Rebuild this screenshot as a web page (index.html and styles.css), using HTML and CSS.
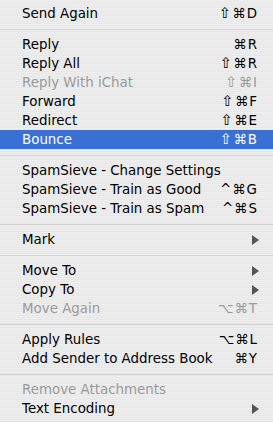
FILE: index.html
```html
<!DOCTYPE html>
<html lang="en">
<head>
    <meta charset="UTF-8">
    <meta name="viewport" content="width=device-width, initial-scale=1.0">
    <title>Message Menu</title>
    <link rel="stylesheet" href="styles.css">
</head>
<body>
    <div class="menu">
        <div class="item"><span>Send Again</span><span class="keys"><span class="shift">⇧</span>⌘D</span></div>
        <div class="sep"></div>
        <div class="item"><span>Reply</span><span class="keys">⌘R</span></div>
        <div class="item"><span>Reply All</span><span class="keys"><span class="shift">⇧</span>⌘R</span></div>
        <div class="item disabled"><span>Reply With iChat</span><span class="keys"><span class="shift">⇧</span>⌘I</span></div>
        <div class="item"><span>Forward</span><span class="keys"><span class="shift">⇧</span>⌘F</span></div>
        <div class="item"><span>Redirect</span><span class="keys"><span class="shift">⇧</span>⌘E</span></div>
        <div class="item selected"><span>Bounce</span><span class="keys"><span class="shift">⇧</span>⌘B</span></div>
        <div class="sep"></div>
        <div class="item"><span>SpamSieve - Change Settings</span></div>
        <div class="item"><span>SpamSieve - Train as Good</span><span class="keys">^⌘G</span></div>
        <div class="item"><span>SpamSieve - Train as Spam</span><span class="keys">^⌘S</span></div>
        <div class="sep"></div>
        <div class="item"><span>Mark</span><span class="arrow"></span></div>
        <div class="sep"></div>
        <div class="item"><span>Move To</span><span class="arrow"></span></div>
        <div class="item"><span>Copy To</span><span class="arrow"></span></div>
        <div class="item disabled"><span>Move Again</span><span class="keys">⌥⌘T</span></div>
        <div class="sep"></div>
        <div class="item"><span>Apply Rules</span><span class="keys">⌥⌘L</span></div>
        <div class="item"><span>Add Sender to Address Book</span><span class="keys">⌘Y</span></div>
        <div class="sep"></div>
        <div class="item disabled"><span>Remove Attachments</span></div>
        <div class="item"><span>Text Encoding</span><span class="arrow"></span></div>
    </div>
</body>
</html>
```

FILE: styles.css
```css
* {
    margin: 0;
    padding: 0;
    box-sizing: border-box;
}
body {
    font-family: 'DejaVu Sans', sans-serif;
    background-color: #ececec;
}
.menu {
    width: 273px;
    height: 422px;
    padding: 4px 0;
    background: repeating-linear-gradient(#efefef 0 1px, #e7e7e7 1px 2px);
    font-size: 13.4px;
    color: #000;
}
.item {
    display: flex;
    justify-content: space-between;
    align-items: center;
    height: 19px;
    padding: 0 15px 0 22px;
}
.keys {
    letter-spacing: 1px;
}
.shift {
    font-size: 15px;
    line-height: 1;
}
.disabled {
    color: #9a9a9a;
}
.selected {
    background-color: #3a70d4;
    color: white;
}
.sep {
    height: 12px;
    display: flex;
    align-items: center;
}
.sep::after {
    content: "";
    flex: 1;
    height: 1px;
    background-color: #d2d2d2;
}
.arrow {
    width: 0;
    height: 0;
    margin-right: -1px;
    border-top: 5px solid transparent;
    border-bottom: 5px solid transparent;
    border-left: 7px solid #555;
}
```
